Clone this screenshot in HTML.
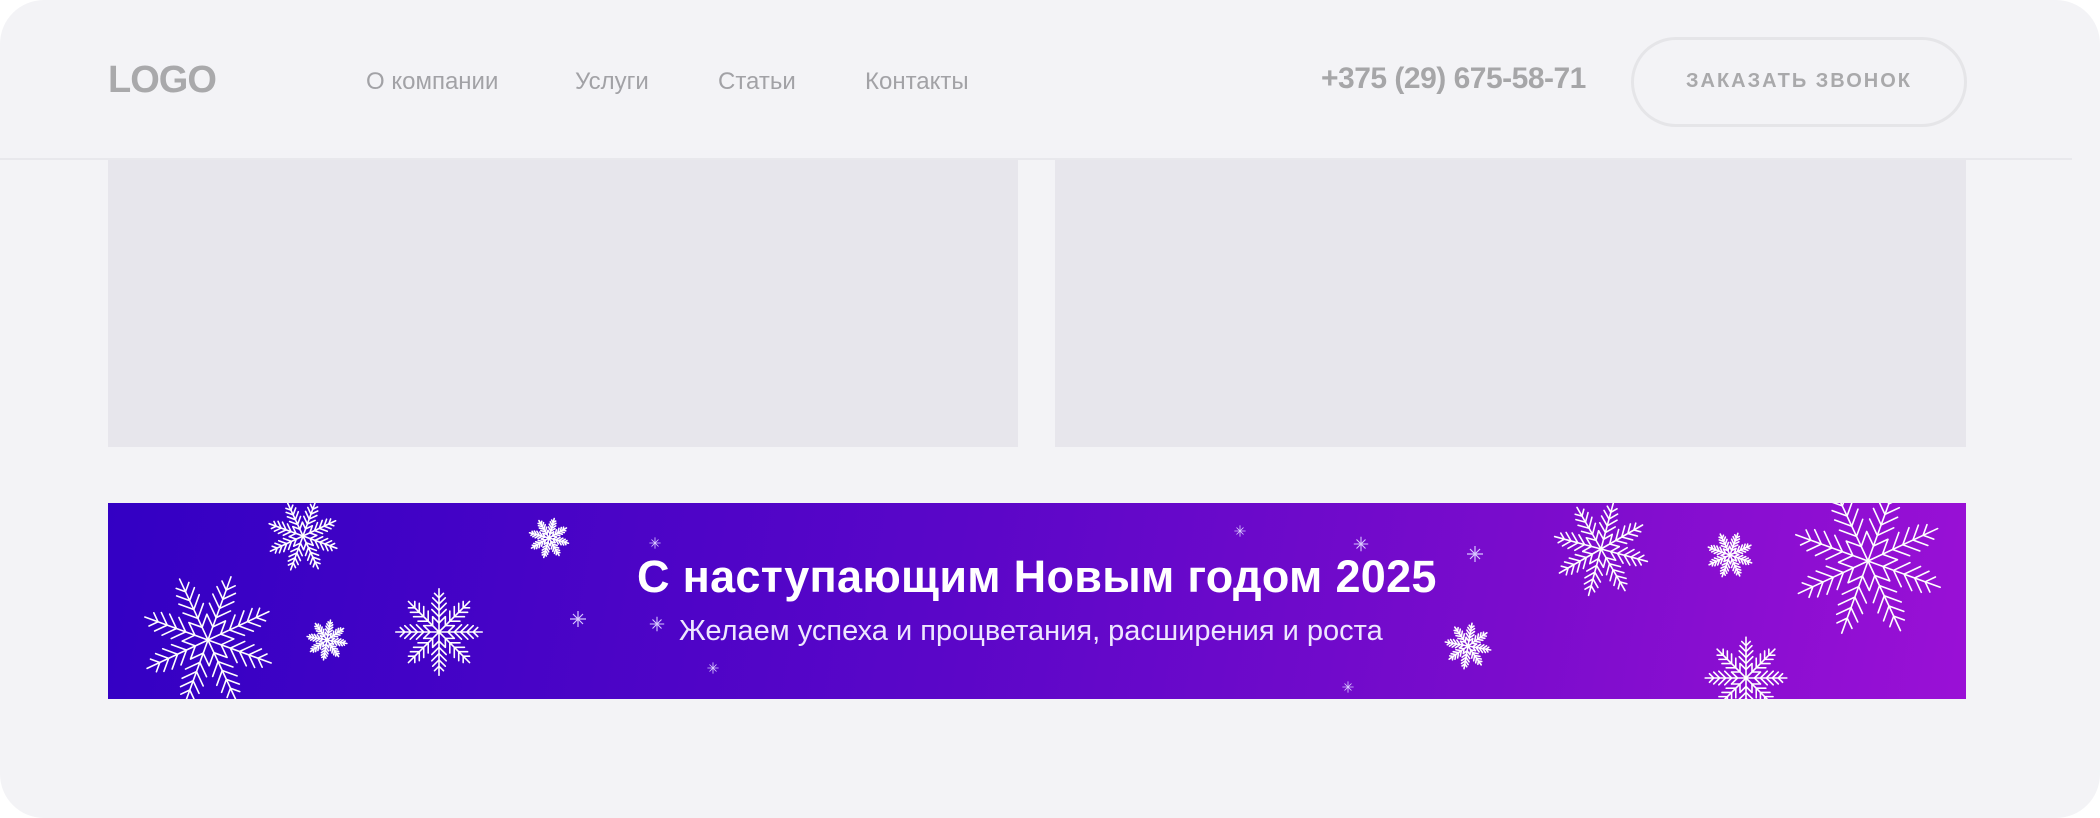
<!DOCTYPE html>
<html><head><meta charset="utf-8">
<style>
html,body{margin:0;padding:0;background:#fff;}
body{width:2100px;height:818px;position:relative;overflow:hidden;font-family:"Liberation Sans",sans-serif;}
.card{position:absolute;left:0;top:0;width:2100px;height:818px;background:#f3f3f6;border-radius:44px;overflow:hidden;}
.hdr{position:absolute;left:0;top:0;width:2072px;height:158px;border-bottom:2px solid #e8e8ec;}
.logo{position:absolute;left:108px;top:60px;font-size:38px;font-weight:bold;color:#a9a9ab;letter-spacing:-1px;line-height:40px;}
.nav{position:absolute;top:67px;font-size:24px;color:#a2a2a6;line-height:30px;}
.phone{position:absolute;left:1321px;top:62px;font-size:30px;font-weight:bold;color:#a6a6a8;line-height:34px;letter-spacing:-0.5px;}
.btn{position:absolute;left:1631px;top:37px;width:330px;height:84px;border:3px solid #e5e5e8;border-radius:46px;box-sizing:content-box;}
.btn span{position:absolute;left:0;right:0;top:28px;text-align:center;font-size:20px;font-weight:bold;color:#a9a9ab;letter-spacing:2px;line-height:26px;}
.box{position:absolute;top:160px;height:287px;background:#e7e6ec;}
.banner{position:absolute;left:108px;top:503px;width:1858px;height:196px;background:linear-gradient(100deg,#3300c4 0%,#5a06c8 45%,#7a0ccc 75%,#9a10d6 100%);overflow:hidden;}
.t1{position:absolute;left:529px;top:49px;font-size:45px;font-weight:bold;color:#fff;line-height:50px;white-space:nowrap;letter-spacing:0.3px;}
.t2{position:absolute;left:571px;top:111px;font-size:29px;color:#eee6ff;line-height:34px;white-space:nowrap;font-weight:normal;letter-spacing:0;}
svg.sf{position:absolute;left:0;top:0;}
</style></head><body>
<div class="card">
 <div class="hdr"></div>
 <div class="logo">LOGO</div>
 <div class="nav" style="left:366px">О компании</div>
 <div class="nav" style="left:575px">Услуги</div>
 <div class="nav" style="left:718px">Статьи</div>
 <div class="nav" style="left:865px">Контакты</div>
 <div class="phone">+375 (29) 675-58-71</div>
 <div class="btn"><span>ЗАКАЗАТЬ ЗВОНОК</span></div>
 <div class="box" style="left:108px;width:910px"></div>
 <div class="box" style="left:1055px;width:911px"></div>
 <div class="banner">
  <svg class="sf" width="1858" height="196" viewBox="0 0 1858 196">
   <defs>
    <g id="arm" stroke="#fff" stroke-width="1.6" fill="none" stroke-linecap="round">
     <path vector-effect="non-scaling-stroke" d="M0 0 L0 -48"/>
     <path vector-effect="non-scaling-stroke" d="M0 -10 L-7 -17 M0 -10 L7 -17 M0 -17 L-8 -25 M0 -17 L8 -25 M0 -24 L-8 -32 M0 -24 L8 -32 M0 -31 L-7 -38 M0 -31 L7 -38 M0 -38 L-5 -43 M0 -38 L5 -43"/>
    </g>
    <g id="flake">
     <use href="#arm"/>
     <use href="#arm" transform="rotate(45)"/>
     <use href="#arm" transform="rotate(90)"/>
     <use href="#arm" transform="rotate(135)"/>
     <use href="#arm" transform="rotate(180)"/>
     <use href="#arm" transform="rotate(225)"/>
     <use href="#arm" transform="rotate(270)"/>
     <use href="#arm" transform="rotate(315)"/>
    </g>
    <g id="star" stroke="#d8c8ff" stroke-width="1.2">
     <path d="M0 -8 L0 8 M-8 0 L8 0 M-5 -5 L5 5 M-5 5 L5 -5"/>
    </g>
   </defs>
   <use href="#flake" transform="translate(100,137) scale(1.4) rotate(20)"/>
   <use href="#flake" transform="translate(195,33) scale(0.75) rotate(20)"/>
   <use href="#flake" transform="translate(441,35) scale(0.42) rotate(15)"/>
   <use href="#flake" transform="translate(219,137) scale(0.42) rotate(10)"/>
   <use href="#flake" transform="translate(331,129) scale(0.9) rotate(0)"/>
   <use href="#flake" transform="translate(1493,46) scale(1.0) rotate(15)"/>
   <use href="#flake" transform="translate(1622,52) scale(0.48) rotate(20)"/>
   <use href="#flake" transform="translate(1760,58) scale(1.6) rotate(20)"/>
   <use href="#flake" transform="translate(1638,175) scale(0.85) rotate(0)"/>
   <use href="#flake" transform="translate(1360,143) scale(0.48) rotate(10)"/>
   <use href="#star" transform="translate(549,121) scale(0.9)"/>
   <use href="#star" transform="translate(470,116)"/>
   <use href="#star" transform="translate(547,40) scale(0.7)"/>
   <use href="#star" transform="translate(605,165) scale(0.7)"/>
   <use href="#star" transform="translate(1132,28) scale(0.7)"/>
   <use href="#star" transform="translate(1253,41) scale(0.9)"/>
   <use href="#star" transform="translate(1367,51) scale(1)"/>
   <use href="#star" transform="translate(1240,184) scale(0.7)"/>
  </svg>
  <div class="t1">С наступающим Новым годом 2025</div>
  <div class="t2">Желаем успеха и процветания, расширения и роста</div>
 </div>
</div>
</body></html>
